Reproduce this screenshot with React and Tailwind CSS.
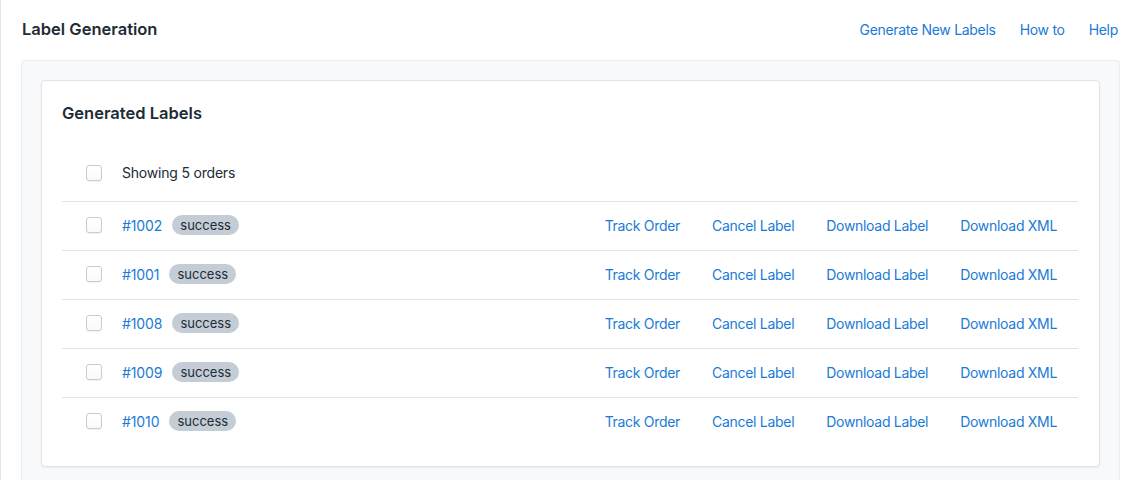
import React from "react";

const orders = [
  { id: "#1002", status: "success" },
  { id: "#1001", status: "success" },
  { id: "#1008", status: "success" },
  { id: "#1009", status: "success" },
  { id: "#1010", status: "success" },
];

const actions = ["Track Order", "Cancel Label", "Download Label", "Download XML"];

const Checkbox = () => (
  <span className="block w-4 h-4 rounded-[3px] border border-[#c4cdd5] bg-gradient-to-b from-white to-[#f9fafb] shadow-[0_1px_0_rgba(22,29,37,0.05)]" />
);

export default function App() {
  return (
    <div
      className="min-h-[480px] bg-white border-l border-[#e4e6ea] text-[#212b36]"
      style={{ fontFamily: "Inter, 'Noto Sans', sans-serif" }}
    >
      <div className="flex items-center justify-between h-[60px] pl-[21px] pr-[19px] pb-[2px]">
        <h1 className="text-[16.5px] font-semibold">Label Generation</h1>
        <div className="flex items-center gap-6 text-[14px] tracking-[-0.3px] text-[#1a7bd6]">
          <a href="#">Generate New Labels</a>
          <a href="#">How to</a>
          <a href="#">Help</a>
        </div>
      </div>
      <div className="ml-[20px] mr-[17px] p-[19px] pb-6 bg-[#f8f9fb] border border-[#eaecef] rounded-[4px]">
        <div className="bg-white border border-[#e2e4e8] rounded-[4px] shadow-[0_1px_2px_rgba(0,0,0,0.06)] pl-5 pr-[21px] pt-5 pb-5">
          <h2 className="text-[16.5px] leading-6 font-semibold">Generated Labels</h2>
          <div className="flex items-center pt-10 pb-5 pl-6 gap-5 text-[14px] leading-4 tracking-[-0.2px]">
            <Checkbox />
            <span>Showing 5 orders</span>
          </div>
          {orders.map((order) => (
            <div
              key={order.id}
              className="flex items-center h-[49px] pb-[2px] border-t border-[#dfe3e8] pl-6 pr-[21px] text-[14px] tracking-[-0.3px]"
            >
              <Checkbox />
              <a href="#" className="ml-5 text-[#1a7bd6] tracking-[-0.1px]">{order.id}</a>
              <span className="ml-[10px] px-[8px] h-5 leading-5 rounded-full bg-[#c4cdd5] text-[13px] font-normal tracking-normal text-[#212b36]">
                {order.status}
              </span>
              <div className="ml-auto flex items-center gap-8 text-[#1a7bd6]">
                {actions.map((a) => (
                  <a key={a} href="#">{a}</a>
                ))}
              </div>
            </div>
          ))}
        </div>
      </div>
    </div>
  );
}
